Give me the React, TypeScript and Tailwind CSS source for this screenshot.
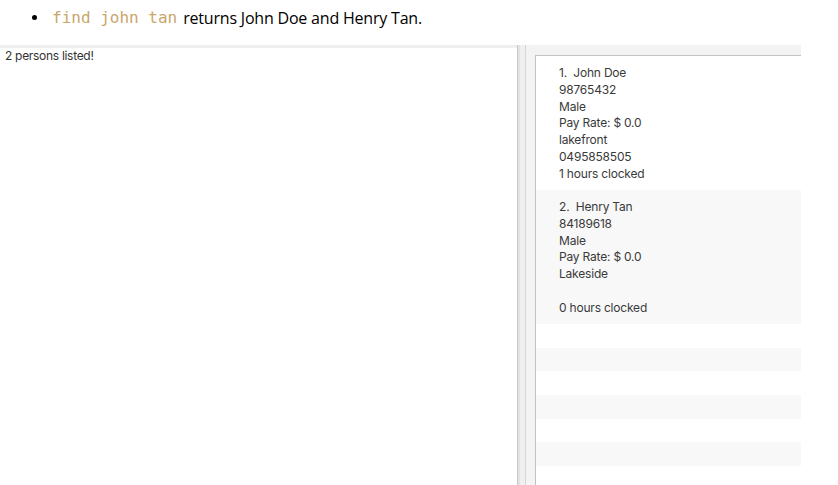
import React from "react";

type Person = {
  name: string;
  phone: string;
  gender: string;
  rate: string;
  address: string;
  extra: string;
  hours: string;
};

const people: Person[] = [
  {
    name: "John Doe",
    phone: "98765432",
    gender: "Male",
    rate: "Pay Rate: $ 0.0",
    address: "lakefront",
    extra: "0495858505",
    hours: "1 hours clocked",
  },
  {
    name: "Henry Tan",
    phone: "84189618",
    gender: "Male",
    rate: "Pay Rate: $ 0.0",
    address: "Lakeside",
    extra: "",
    hours: "0 hours clocked",
  },
];

const PersonCard: React.FC<{ p: Person; index: number }> = ({ p, index }) => {
  const bg = index % 2 === 0 ? "bg-white" : "bg-[#f8f8f8]";
  return (
    <div className={`${bg} h-[134px] pl-[23px] pt-[9px] text-[12px] leading-[16.8px] text-[#3a3a3a] tracking-[-0.2px]`}>
      <div>
        {index + 1}.&nbsp;&nbsp;{p.name}
      </div>
      <div>{p.phone}</div>
      <div>{p.gender}</div>
      <div>{p.rate}</div>
      <div>{p.address}</div>
      <div className="h-[16.8px]">{p.extra}</div>
      <div>{p.hours}</div>
    </div>
  );
};

const App: React.FC = () => {
  const emptyRows = [0, 1, 2, 3, 4, 5, 6];
  return (
    <div className="w-[838px] h-[485px] overflow-hidden bg-white">
      <div className="h-[45px] pl-[32px] pt-[6px] flex items-start" style={{ fontFamily: '"Open Sans", "Noto Sans", sans-serif' }}>
        <span className="mt-[9px] w-[5px] h-[5px] rounded-full bg-black mr-[15px]" />
        <span className="text-[16px] leading-[24px] text-[#c9a66b] mr-[6px]" style={{ fontFamily: '"DejaVu Sans Mono", monospace' }}>
          find john tan
        </span>
        <span className="text-[16px] leading-[24px] text-black tracking-[-0.2px]">returns John Doe and Henry Tan.</span>
      </div>

      <div className="flex w-[801px] h-[440px]" style={{ fontFamily: "Inter, sans-serif" }}>
        <div className="w-[517px] flex flex-col">
          <div className="h-[3px] bg-[#efefef]" />
          <div className="pl-[5px] pt-[1px] text-[12px] leading-[14px] text-[#333] tracking-[-0.3px]">2 persons listed!</div>
        </div>

        <div className="flex w-[9px]">
          <div className="w-px bg-[#c9c9c9]" />
          <div className="w-[2px] bg-[#e2e2e2]" />
          <div className="w-[5px] bg-[#efefef]" />
          <div className="w-px bg-[#d6d6d6]" />
        </div>

        <div className="flex-1 bg-[#f3f3f3] pt-[10px] pl-[9px] flex flex-col">
          <div className="flex-1 border-t border-l border-[#c2c2c2] bg-white flex flex-col">
            {people.map((p, i) => (
              <PersonCard key={p.name} p={p} index={i} />
            ))}
            {emptyRows.map((r) => (
              <div key={r} className={`h-[23.7px] ${r % 2 === 0 ? "bg-white" : "bg-[#f8f8f8]"}`} />
            ))}
          </div>
        </div>
      </div>
    </div>
  );
};

export default App;
